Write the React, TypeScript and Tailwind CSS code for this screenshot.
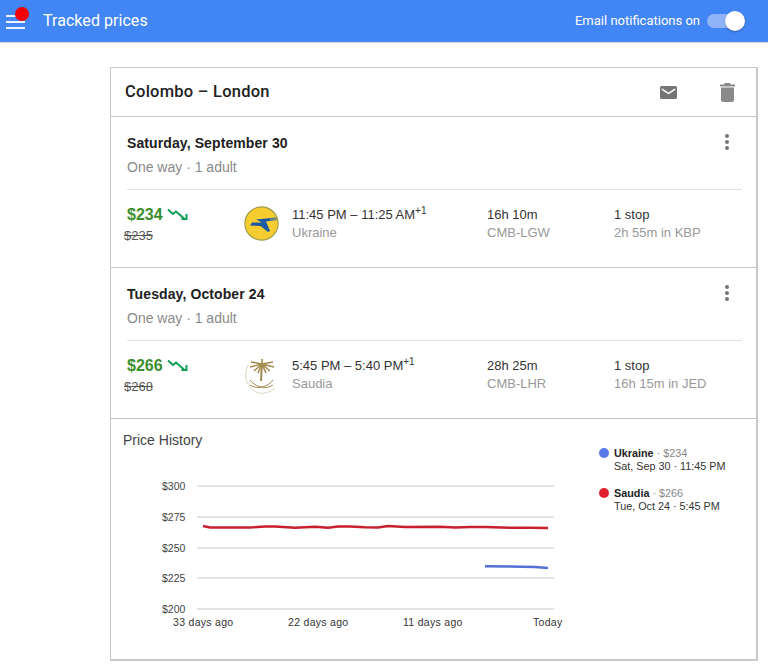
import React from "react";

const roboto = "font-['Roboto',sans-serif]";
const arial = "font-['Liberation_Sans',Arial,sans-serif]";

function TrendDown() {
  return (
    <svg width="22" height="14" viewBox="0 0 22 14" fill="none" stroke="#0f9d58" strokeWidth="2">
      <path d="M1 2.5 L6 7 L9 4.5 L17 11.5" />
      <path d="M14.5 12 H19.5 V7" />
    </svg>
  );
}

function UkraineLogo() {
  return (
    <svg width="35" height="35" viewBox="0 0 35 35">
      <circle cx="17.5" cy="17.5" r="16.6" fill="#f6cd2e" stroke="#a39c4c" strokeWidth="1.2" />
      <path d="M12 13.5 L32 11.5 L32.5 14 L22 15.5 L26 25 L24 26 L16.5 20 L6 19.5 L8 16.5 L18 16.5 Z" fill="#1d5aa6" />
      <path d="M26 12.7 L32 12 L32.4 13.8 L26 14.6 Z" fill="#6f8d7a" />
    </svg>
  );
}

function SaudiaLogo() {
  return (
    <svg width="35" height="36" viewBox="0 0 35 36" fill="none">
      <path d="M4 7 C-1 17 2 30 14 35 C20 36 27 34 31 30" stroke="#d8d3c4" strokeWidth="1" />
      <path d="M18 5 L17 23" stroke="#a08b55" strokeWidth="2" />
      <path d="M18 6 L7 4 M18 6 L29 4 M18 6 L6 9 M18 6 L30 9 M18 6 L10 13 M18 6 L26 13 M18 6 L14 15 M18 6 L22 15 M18 6 L18 1" stroke="#a58c4f" strokeWidth="1.6" />
      <path d="M6 22 C11 29 22 32 29 27 M29 22 C24 29 13 32 6 27" stroke="#a58c4f" strokeWidth="1" />
    </svg>
  );
}

function Dots() {
  return (
    <svg width="6" height="18" viewBox="0 0 6 18" fill="#757575">
      <circle cx="3" cy="3" r="2" />
      <circle cx="3" cy="9" r="2" />
      <circle cx="3" cy="15" r="2" />
    </svg>
  );
}

type Leg = {
  date: string; price: string; old: string; logo: React.ReactNode; times: string; airline: string;
  dur: string; route: string; stops: string; layover: string; logoOffset: string;
};

function LegSection({ leg }: { leg: Leg }) {
  return (
    <section className={`${arial} h-[151px] border-b border-[#c4c4c4] pl-[16px] pr-[14px] pt-[15px]`}>
      <div className="relative h-[58px] border-b border-[#e2e2e2]">
        <div className="text-[14px] leading-[22px] font-bold text-[#212121] tracking-[0.1px]">{leg.date}</div>
        <div className="text-[14px] leading-[20px] mt-[3px] text-[#8a8a8a]">One way · 1 adult</div>
        <div className="absolute right-[12px] top-[1px]"><Dots /></div>
      </div>
      <div className="flex pt-[15px]">
        <div className="w-[117px]">
          <div className="flex items-center gap-[4px]">
            <span className="text-[16px] leading-[20px] font-bold text-[#3c8f2c]">{leg.price}</span>
            <div className="-mt-[2px]"><TrendDown /></div>
          </div>
          <div className="text-[13px] leading-[16px] mt-[3px] -ml-[3px] text-[#555] line-through">{leg.old}</div>
        </div>
        <div className={`w-[48px] ${leg.logoOffset}`}>{leg.logo}</div>
        <div className="w-[195px] text-[13px]">
          <div className="leading-[17px] mt-[1px] text-[#333]">{leg.times}<sup className="text-[10px] leading-none">+1</sup></div>
          <div className="leading-[17px] text-[#999] mt-[1px]">{leg.airline}</div>
        </div>
        <div className="w-[127px] text-[13px]">
          <div className="leading-[17px] mt-[1px] text-[#333]">{leg.dur}</div>
          <div className="leading-[17px] text-[#999] mt-[1px]">{leg.route}</div>
        </div>
        <div className="text-[13px]">
          <div className="leading-[17px] mt-[1px] text-[#333]">{leg.stops}</div>
          <div className="leading-[17px] text-[#999] mt-[1px]">{leg.layover}</div>
        </div>
      </div>
    </section>
  );
}

function Chart() {
  const ys = [486, 517, 548, 578, 609];
  const labels = ["$300", "$275", "$250", "$225", "$200"];
  const xs: [number, string][] = [[173, "33 days ago"], [288, "22 days ago"], [403, "11 days ago"], [533, "Today"]];
  return (
    <svg width="456" height="170" viewBox="110 470 456 170" className="absolute -left-[1px] top-[51px]" style={{ fontFamily: "'Liberation Sans', Arial, sans-serif" }}>
      {ys.map((y, i) => (
        <g key={y}>
          <line x1="197" x2="554" y1={y} y2={y} stroke="#c9c9c9" strokeWidth="1" />
          <text x="162" y={y + 4} fontSize="10.5" fill="#444">{labels[i]}</text>
        </g>
      ))}
      {xs.map(([x, t]) => (
        <text key={t} x={x} y="626" fontSize="10.5" letterSpacing="0.3" fill="#333">{t}</text>
      ))}
      <polyline fill="none" stroke="#c8202f" strokeWidth="2.4" points="203,526 210,527.5 230,527.5 250,527.5 265,526.5 275,526.5 295,527.8 315,526.8 328,527.8 338,526.5 350,526.5 365,527.3 378,527.5 388,526 405,527 440,526.8 455,527.5 470,527 485,527 510,527.7 530,527.7 548,528" />
      <polyline fill="none" stroke="#5470d6" strokeWidth="2.4" points="485,566.3 510,566.5 535,567 548,568" />
    </svg>
  );
}

const legs: Leg[] = [
  { date: "Saturday, September 30", price: "$234", old: "$235", logo: <UkraineLogo />, times: "11:45 PM – 11:25 AM", airline: "Ukraine", dur: "16h 10m", route: "CMB-LGW", stops: "1 stop", layover: "2h 55m in KBP", logoOffset: "mt-[1px]" },
  { date: "Tuesday, October 24", price: "$266", old: "$268", logo: <SaudiaLogo />, times: "5:45 PM – 5:40 PM", airline: "Saudia", dur: "28h 25m", route: "CMB-LHR", stops: "1 stop", layover: "16h 15m in JED", logoOffset: "mt-[2px]" },
];

export default function App() {
  return (
    <div className="w-[768px] h-[667px] bg-white overflow-hidden">
      <header className={`${roboto} h-[42px] bg-[#4285f4] flex items-center relative shadow-[0_1px_1px_rgba(0,0,0,0.15)]`}>
        <div className="ml-[6px] w-[19px] flex flex-col gap-[4px] mt-[2px]">
          <div className="h-[2px] bg-white/90" />
          <div className="h-[2px] bg-white/90" />
          <div className="h-[2px] bg-white/90" />
        </div>
        <div className="absolute left-[15px] top-[7px] w-[14px] h-[14px] rounded-full bg-[#f50000]" />
        <div className="ml-[18px] text-[16px] text-white tracking-[0.05px]">Tracked prices</div>
        <div className="ml-auto mr-[68px] text-[13px] text-white">Email notifications on</div>
        <div className="absolute left-[707px] top-[14px] w-[34px] h-[14px] rounded-full bg-[#8fb4f9]" />
        <div className="absolute left-[725px] top-[11px] w-[20px] h-[20px] rounded-full bg-white shadow-[0_1px_2px_rgba(0,0,0,0.3)]" />
      </header>

      <main className="ml-[110px] mt-[25px] w-[648px] h-[594px] border border-[#c8c8c8] border-r-2 border-b-2">
        <div className="h-[49px] border-b border-[#c4c4c4] flex items-center pl-[14px]">
          <h1 className={`${roboto} text-[16.5px] font-medium text-[#212121] tracking-[0.25px]`}>Colombo – London</h1>
          <svg className="ml-auto" width="17" height="13" viewBox="0 0 17 13" fill="#757575">
            <path d="M1.5 0 H15.5 A1.5 1.5 0 0 1 17 1.5 V11.5 A1.5 1.5 0 0 1 15.5 13 H1.5 A1.5 1.5 0 0 1 0 11.5 V1.5 A1.5 1.5 0 0 1 1.5 0 Z M1.8 2.2 L8.5 6.6 L15.2 2.2 V3.9 L8.5 8.3 L1.8 3.9 Z" fillRule="evenodd" />
          </svg>
          <svg className="ml-[43px] mr-[21px]" width="15" height="19" viewBox="0 0 15 19" fill="#8a8a8a">
            <path d="M5 0 H10 L11 1.5 H15 V3.5 H0 V1.5 H4 Z M1 4.5 H14 V17 A2 2 0 0 1 12 19 H3 A2 2 0 0 1 1 17 Z" />
          </svg>
        </div>
        {legs.map((l) => <LegSection key={l.date} leg={l} />)}
        <section className="relative h-[240px]">
          <h2 className={`${arial} pl-[12px] pt-[13px] text-[14px] leading-[16px] text-[#444]`}>Price History</h2>
          <Chart />
          <div className={`${arial} absolute left-[488px] top-[28px] text-[10.8px] leading-[13px] text-[#333] flex flex-col gap-[14px]`}>
            <div className="flex gap-[5px]">
              <div className="w-[10px] h-[10px] mt-[1px] rounded-full bg-[#5a78e8]" />
              <div><div><b className="text-[#222]">Ukraine</b> <span className="text-[#888]">· $234</span></div><div>Sat, Sep 30 · 11:45 PM</div></div>
            </div>
            <div className="flex gap-[5px]">
              <div className="w-[10px] h-[10px] mt-[1px] rounded-full bg-[#e0202e]" />
              <div><div><b className="text-[#222]">Saudia</b> <span className="text-[#888]">· $266</span></div><div>Tue, Oct 24 · 5:45 PM</div></div>
            </div>
          </div>
        </section>
      </main>
    </div>
  );
}
